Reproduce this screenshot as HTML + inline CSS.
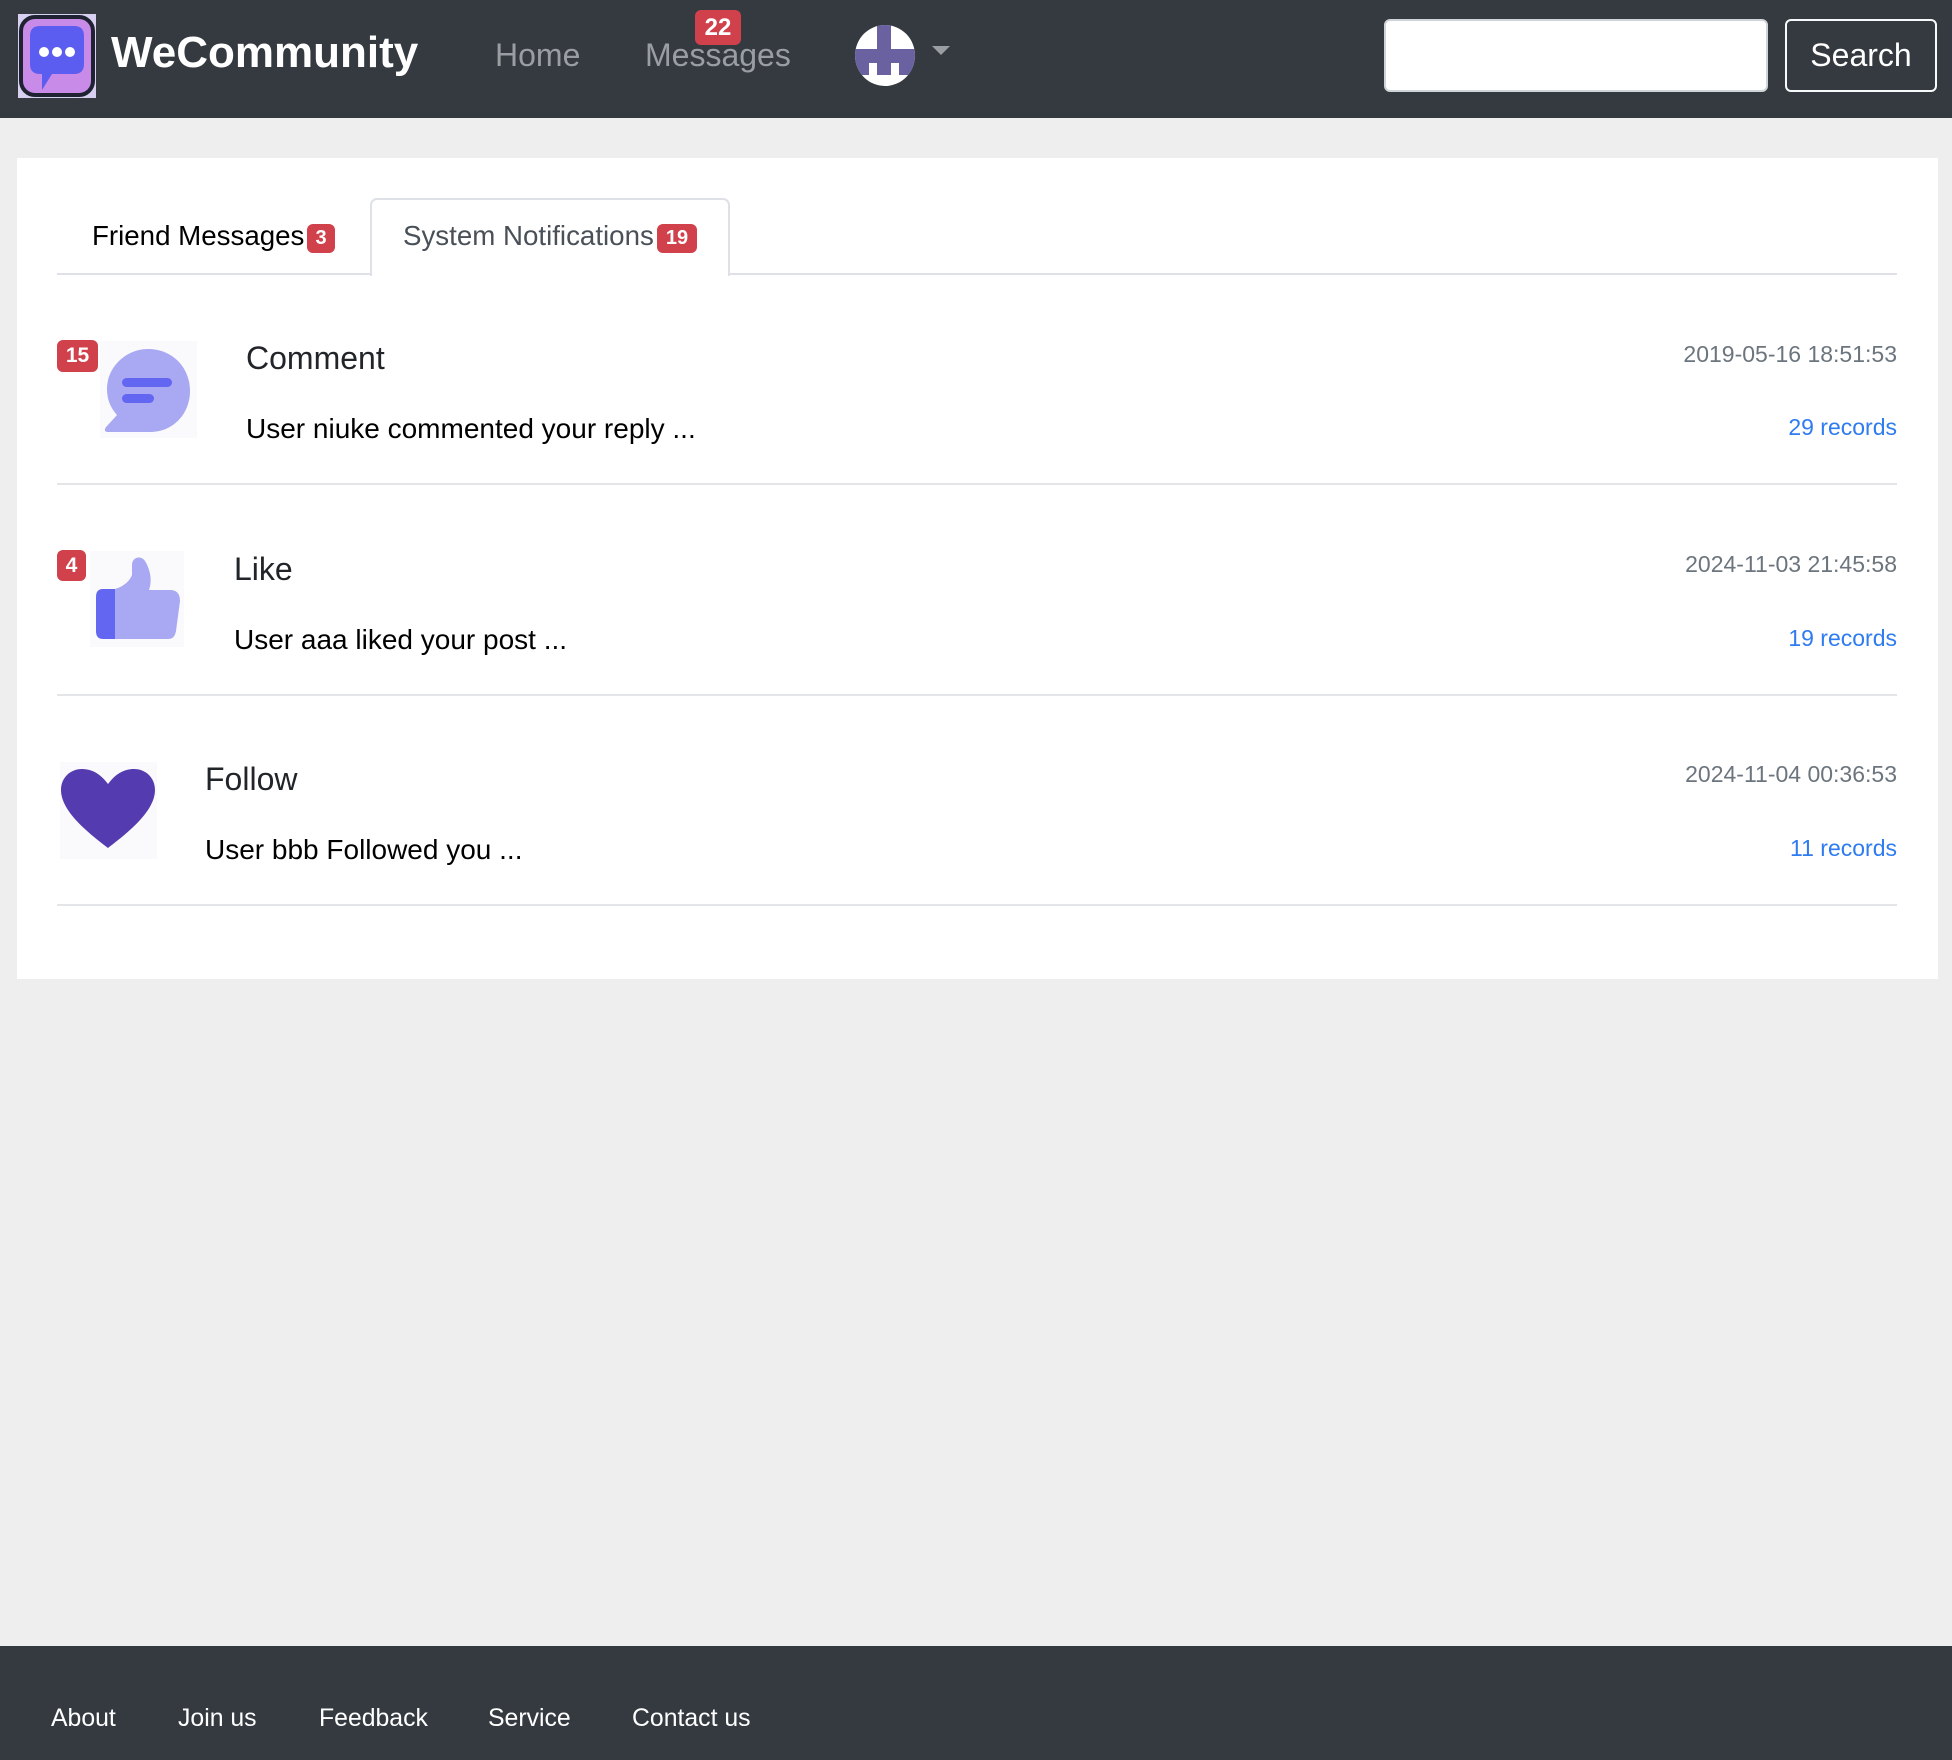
<!DOCTYPE html>
<html><head><meta charset="utf-8">
<style>
*{margin:0;padding:0;box-sizing:border-box}
body{width:1952px;height:1760px;background:#eeeeee;font-family:"Liberation Sans",Arial,sans-serif;position:relative;overflow:hidden}
.a{position:absolute;white-space:nowrap}
.nav{position:absolute;left:0;top:0;width:1952px;height:118px;background:#343a40}
.badge{position:absolute;background:#d0414b;color:#fff;font-weight:bold;border-radius:6px;text-align:center}
.card{position:absolute;left:17px;top:158px;width:1921px;height:821px;background:#fff}
.sep{position:absolute;left:57px;width:1840px;height:2px;background:#e3e5e8}
.title{font-size:32px;color:#212529}
.sub{font-size:28px;color:#000}
.date{font-size:23px;color:#6c757d;right:55px}
.rec{font-size:23px;color:#2f7bf0;right:55px}
.foot{position:absolute;left:0;top:1646px;width:1952px;height:114px;background:#343a40}
.fl{color:#fff;font-size:24.8px;top:1705px}
</style></head><body>
<div class="nav"></div>
<svg class="a" style="left:18px;top:14px" width="78" height="84" viewBox="0 0 78 84">
<rect width="78" height="84" fill="#d8d0f0"/>
<rect x="2" y="2" width="74" height="80" rx="14" fill="#c98be8"/>
<rect x="3" y="3" width="72" height="78" rx="14" fill="none" stroke="#1f2230" stroke-width="4"/>
<path d="M12 22 Q12 12 22 12 H56 Q66 12 66 22 V50 Q66 60 56 60 H34 L24 76 V60 H22 Q12 60 12 50Z" fill="#5b5cf0"/>
<circle cx="26" cy="38" r="5" fill="#fff"/><circle cx="39" cy="38" r="5" fill="#fff"/><circle cx="52" cy="38" r="5" fill="#fff"/>
</svg>
<div class="a" style="left:111px;top:28px;font-size:44px;font-weight:bold;color:#fff">WeCommunity</div>
<div class="a" style="left:495px;top:37px;font-size:32px;color:#9a9da1">Home</div>
<div class="a" style="left:645px;top:37px;font-size:32px;color:#9a9da1">Messages</div>
<div class="badge" style="left:695px;top:10px;width:46px;height:35px;font-size:24px;line-height:35px">22</div>
<svg class="a" style="left:855px;top:25px" width="60" height="61" viewBox="0 0 60 61">
<defs><clipPath id="c"><ellipse cx="30" cy="30.5" rx="30" ry="30.5"/></clipPath></defs>
<g clip-path="url(#c)"><rect width="60" height="61" fill="#fff"/>
<rect x="0" y="24" width="60" height="14" fill="#6a62a0"/><rect x="22" y="0" width="14" height="50" fill="#6a62a0"/>
<rect x="0" y="38" width="14" height="12" fill="#6a62a0"/><rect x="44" y="38" width="16" height="12" fill="#6a62a0"/></g></svg>
<div class="a" style="left:932px;top:46px;width:0;height:0;border-left:9px solid transparent;border-right:9px solid transparent;border-top:9px solid #9a9da1"></div>
<div class="a" style="left:1384px;top:19px;width:384px;height:73px;background:#fff;border:2px solid #ced4da;border-radius:6px"></div>
<div class="a" style="left:1785px;top:19px;width:152px;height:73px;border:2px solid #f8f9fa;border-radius:6px;color:#fff;font-size:32px;text-align:center;line-height:69px">Search</div>

<div class="card"></div>
<div class="a" style="left:57px;top:273px;width:1840px;height:2px;background:#dee2e6"></div>
<div class="a" style="left:370px;top:198px;width:360px;height:78px;background:#fff;border:2px solid #dee2e6;border-bottom:none;border-radius:7px 7px 0 0"></div>
<div class="a" style="left:92px;top:220px;font-size:27.7px;color:#000">Friend Messages</div>
<div class="badge" style="left:307px;top:224px;width:28px;height:29px;font-size:20px;line-height:29px">3</div>
<div class="a" style="left:403px;top:220px;font-size:27.7px;color:#495057">System Notifications</div>
<div class="badge" style="left:657px;top:224px;width:40px;height:29px;font-size:20px;line-height:29px">19</div>

<div class="badge" style="left:57px;top:340px;width:41px;height:32px;font-size:21px;line-height:32px">15</div>
<svg class="a" style="left:100px;top:341px" width="97" height="97" viewBox="0 0 97 97">
<rect width="97" height="97" fill="#fafafc"/>
<path d="M48 8 C72 8 90 26 90 50 C90 72 74 91 50 91 H8 C4 91 4 88 7 85 L17 74 C10 66 7 58 7 48 C7 26 26 8 48 8Z" fill="#a9a8f2"/>
<rect x="22" y="37" width="50" height="9" rx="4.5" fill="#6366f1"/><rect x="22" y="53" width="32" height="9" rx="4.5" fill="#6366f1"/>
</svg>
<div class="a title" style="left:246px;top:340px">Comment</div>
<div class="a sub" style="left:246px;top:413px">User niuke commented your reply ...</div>
<div class="a date" style="top:341px">2019-05-16 18:51:53</div>
<div class="a rec" style="top:414px">29 records</div>
<div class="sep" style="top:483px"></div>

<div class="badge" style="left:57px;top:550px;width:29px;height:31px;font-size:21px;line-height:31px">4</div>
<svg class="a" style="left:90px;top:551px" width="94" height="96" viewBox="0 0 94 96">
<rect width="94" height="96" fill="#fafafc"/>
<path d="M25 38 V88 H78 C83 88 85 85 86 80 L90 50 C90 42 86 39 80 39 H59 C62 30 61 20 55 10 C51 4 42 6 42 14 V24 Q38 34 25 38 Z" fill="#a9a8f2"/>
<path d="M13 38 C8 38 6 41 6 46 V80 C6 85 8 88 13 88 H25 V38Z" fill="#6366f1"/>
</svg>
<div class="a title" style="left:234px;top:551px">Like</div>
<div class="a sub" style="left:234px;top:624px">User aaa liked your post ...</div>
<div class="a date" style="top:551px">2024-11-03 21:45:58</div>
<div class="a rec" style="top:625px">19 records</div>
<div class="sep" style="top:694px"></div>

<svg class="a" style="left:60px;top:762px" width="97" height="97" viewBox="0 0 97 97">
<rect width="97" height="97" fill="#fafafc"/>
<path d="M48 86 C30 72 1 50 1 28 C1 16 10 7 22 7 C34 7 42 14 48 22 C54 14 62 7 74 7 C86 7 95 16 95 28 C95 50 66 72 48 86Z" fill="#553bb0"/>
</svg>
<div class="a title" style="left:205px;top:761px">Follow</div>
<div class="a sub" style="left:205px;top:834px">User bbb Followed you ...</div>
<div class="a date" style="top:761px">2024-11-04 00:36:53</div>
<div class="a rec" style="top:835px">11 records</div>
<div class="sep" style="top:904px"></div>

<div class="foot"></div>
<div class="a fl" style="left:51px">About</div>
<div class="a fl" style="left:178px">Join us</div>
<div class="a fl" style="left:319px">Feedback</div>
<div class="a fl" style="left:488px">Service</div>
<div class="a fl" style="left:632px">Contact us</div>
</body></html>
